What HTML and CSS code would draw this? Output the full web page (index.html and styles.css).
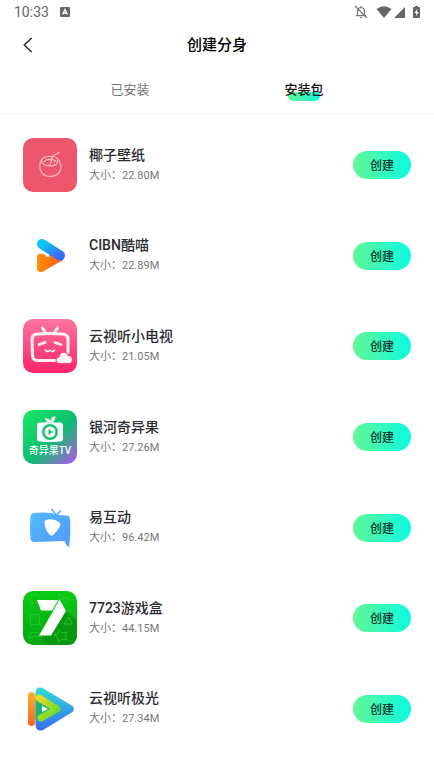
FILE: index.html
```
<!DOCTYPE html>
<html lang="zh-CN">
<head>
    <meta charset="UTF-8">
    <meta name="viewport" content="width=device-width, initial-scale=1.0">
    <title>创建分身</title>
    <link rel="stylesheet" href="styles.css">
</head>
<body>

    <!-- Status bar -->
    <div class="status-bar">
        <span class="time">10:33</span>
        <svg class="app-badge" width="10" height="10" viewBox="0 0 10 10">
            <rect width="10" height="10" rx="1" fill="#666"/>
            <path d="M2.500 7.500 5 2.500l2.500 5M3.600 6h2.800" fill="none" stroke="#fff" stroke-width="1.300"/>
        </svg>
        <div class="status-icons">
            <svg width="14" height="14" viewBox="0 0 14 14" fill="none" stroke="#777" stroke-width="1.200">
                <path d="M3.500 10.500V6q0-3 3.500-3.500Q10.500 3 10.500 6v4.500M2 10.700h10M7 1v2M6 12.500h2M1 1l12 12"/>
            </svg>
            <svg class="wifi" width="16" height="12" viewBox="0 0 16 12">
                <path d="M0.500 3Q8-2.500 15.500 3L8 12z" fill="#666"/>
            </svg>
            <svg width="11" height="11" viewBox="0 0 11 11">
                <path d="M11 0v11H0z" fill="#666"/>
            </svg>
            <svg class="battery" width="7" height="12" viewBox="0 0 7 12">
                <path d="M2 0h3v1h1q1 0 1 1v9q0 1-1 1H1q-1 0-1-1V2q0-1 1-1h1z" fill="#666"/>
                <path d="M4.200 3 1.500 7h1.700v3l2.600-4H4.200z" fill="#fff"/>
            </svg>
        </div>
    </div>

    <!-- Header -->
    <header class="header">
        <button class="back" type="button" aria-label="返回">
            <svg width="10" height="16" viewBox="0 0 10 16">
                <path d="M8.700 1 1.200 8l7.500 7" fill="none" stroke="#222" stroke-width="1.400"/>
            </svg>
        </button>
        <h1>创建分身</h1>
    </header>

    <nav class="tabs">
        <a class="tab" href="#installed">已安装</a>
        <a class="tab active" href="#packages"><span>安装包</span></a>
    </nav>

    <!-- Package list -->
    <ul class="app-list" id="packages">
        <li class="app">
            <svg class="app-icon" viewBox="0 0 54 54">
                <rect width="54" height="54" rx="10" fill="#ee566b"/>
                <g fill="none" stroke="#fbc4cb" stroke-width="1.100" stroke-linecap="round">
                    <path d="M19 21c-5 8-1 17.500 8 17.500S41 31 36 22"/>
                    <path d="M19 21c3-3 6-2.500 9-2.500 5 0 7 2 7 4 0 4-4 5.500-7 5.500-5 0-11-2.500-9-7z"/>
                    <path d="M21 23.500c3-3 9-3 12 0M27 27l2.500-9 6.500-3.500"/>
                </g>
            </svg>
            <div class="info">
                <h2>椰子壁纸</h2>
                <p>大小：22.80M</p>
            </div>
            <button class="create" type="button">创建</button>
        </li>
        <li class="app">
            <svg class="app-icon" viewBox="0 0 54 54">
                <defs>
                    <linearGradient id="cibnBlue" x1="0" y1="0" x2="1" y2="1">
                        <stop offset="0" stop-color="#09c9fa"/>
                        <stop offset="1" stop-color="#396bf2"/>
                    </linearGradient>
                    <linearGradient id="cibnOrange" x1="0" y1="0" x2="1" y2="0">
                        <stop offset="0" stop-color="#ff8f0a"/>
                        <stop offset="1" stop-color="#fa5b12"/>
                    </linearGradient>
                </defs>
                <path d="M14 28q0-4 4-3.500l6 2L35 24l5 7-20 11.500q-6 2-6-4z" fill="url(#cibnOrange)"/>
                <path d="M19 15l18 11.500" fill="none" stroke="url(#cibnBlue)" stroke-width="10" stroke-linecap="round"/>
                <path d="M22 24.500l1.500 3.500 4-.5z" fill="#fff"/>
            </svg>
            <div class="info">
                <h2>CIBN酷喵</h2>
                <p>大小：22.89M</p>
            </div>
            <button class="create" type="button">创建</button>
        </li>
        <li class="app">
            <svg class="app-icon" viewBox="0 0 54 54">
                <defs>
                    <linearGradient id="pinkTv" x1="0" y1="0" x2="0" y2="1">
                        <stop offset="0" stop-color="#fd75a0"/>
                        <stop offset="1" stop-color="#fc2468"/>
                    </linearGradient>
                </defs>
                <rect width="54" height="54" rx="10" fill="url(#pinkTv)"/>
                <g fill="none" stroke="#fff0f4" stroke-linecap="round" stroke-linejoin="round">
                    <path d="M19.500 9l3 4.500M34.500 9l-3 4.500" stroke-width="3"/>
                    <path d="M34 41.500H15q-5 0-5.500-5l-.5-16q0-5 5-5.500 13-1 26 0 5 .5 5 5.500v13" stroke-width="3"/>
                    <path d="M16 25.500l6-2M32 23.500l6 2" stroke-width="2.800"/>
                    <path d="M22.500 31q2 3 4.500 0 2.500 3 4.500 0" stroke-width="1.600"/>
                </g>
                <path d="M36 44.500c-4-1-4-6 0-6.500 0-5 7-7 9-1.500 5-1 6 7 1.500 8z" fill="#fff4f7" stroke="#fc3973"/>
            </svg>
            <div class="info">
                <h2>云视听小电视</h2>
                <p>大小：21.05M</p>
            </div>
            <button class="create" type="button">创建</button>
        </li>
        <li class="app">
            <svg class="app-icon" viewBox="0 0 54 54">
                <defs>
                    <linearGradient id="fruitTv" x1="0" y1="0" x2="1" y2="1">
                        <stop offset="0" stop-color="#1bea65"/>
                        <stop offset="0.550" stop-color="#0dbd70"/>
                        <stop offset="0.750" stop-color="#5b8fa8"/>
                        <stop offset="1" stop-color="#ba4dec"/>
                    </linearGradient>
                </defs>
                <rect width="54" height="54" rx="10" fill="url(#fruitTv)"/>
                <path d="M17 12.500h5q5-2 10 0h5q3 0 3 3v13q0 3-3 3-10 1-20 0-3 0-3-3v-13q0-3 3-3z" fill="#fff"/>
                <path d="M27 13c-3-1-5-2-5-5 3 0 5 1 5.500 3 0-3 2-5 5-5 0 4-2 7-5.500 7z" fill="#fff" stroke="#10c66e" stroke-width="0.500"/>
                <circle cx="27" cy="22" r="8" fill="#10c66e"/>
                <circle cx="27" cy="22" r="5.500" fill="#fff"/>
                <path d="M25.500 19v6l4.500-3z" fill="#10c66e"/>
                <text x="27" y="44" text-anchor="middle" class="icon-text">奇异果TV</text>
            </svg>
            <div class="info">
                <h2>银河奇异果</h2>
                <p>大小：27.26M</p>
            </div>
            <button class="create" type="button">创建</button>
        </li>
        <li class="app">
            <svg class="app-icon" viewBox="0 0 54 54">
                <defs>
                    <linearGradient id="blueTv" x1="0" y1="0" x2="1" y2="1">
                        <stop offset="0" stop-color="#50b9ff"/>
                        <stop offset="1" stop-color="#5598fb"/>
                    </linearGradient>
                </defs>
                <path d="M40 41l6 5V35z" fill="#cde6ff"/>
                <path d="M11 12q14-1.500 24 2l9 .5q3 .5 3 4 1 13-1 27.500-3-1-4-6l-31 1q-3 0-3.500-4-1-11 0-21 .5-4 3.500-4z" fill="url(#blueTv)"/>
                <path d="M28.500 8l5 6.500 4.500-5" fill="none" stroke="#53adff" stroke-width="1.500"/>
                <path d="M23 19q7-2 13 2 2 1 1 4-3 6-7 9-2 1-3 0-5-5-5.500-12 0-2 1.500-3z" fill="#fff"/>
            </svg>
            <div class="info">
                <h2>易互动</h2>
                <p>大小：96.42M</p>
            </div>
            <button class="create" type="button">创建</button>
        </li>
        <li class="app">
            <svg class="app-icon" viewBox="0 0 54 54">
                <defs>
                    <linearGradient id="greenBox" x1="0" y1="0" x2="0" y2="1">
                        <stop offset="0" stop-color="#09cb13"/>
                        <stop offset="1" stop-color="#06a812"/>
                    </linearGradient>
                </defs>
                <rect width="54" height="54" rx="10" fill="url(#greenBox)"/>
                <path d="M42 19l12 11v14q0 10-10 10H25l-8-9z" fill="#079a10"/>
                <g fill="none" stroke="#30c936" stroke-width="0.800">
                    <path d="M6 16l5-5M7 24l9-1 1 10-9 1zM10 24q0 4 4 3"/>
                    <circle cx="12" cy="8" r="4.500"/>
                    <circle cx="38" cy="6" r="2.500"/>
                    <circle cx="43" cy="9" r="2.500"/>
                    <path d="M5 47q2-8 7-5 5-2 7 4l-5-1-4 1zM41 33l5-7 3 7zM36 39l3 3 5-1-2 4 2 4-5-1-4 3v-5l-4-2 4-1z"/>
                </g>
                <path d="M14 9h21L29 19.500H18z" fill="#fff"/>
                <path d="M36.500 8.500 43 20 28 44.500H16L30.500 19.500z" fill="#fff"/>
                <path d="M36 9l-6.500 11" stroke="#8be08e" stroke-width="0.600"/>
            </svg>
            <div class="info">
                <h2>7723游戏盒</h2>
                <p>大小：44.15M</p>
            </div>
            <button class="create" type="button">创建</button>
        </li>
        <li class="app">
            <svg class="app-icon" viewBox="0 0 54 54">
                <defs>
                    <linearGradient id="auroraBlue" x1="0" y1="0" x2="0" y2="1">
                        <stop offset="0" stop-color="#2de0d5"/>
                        <stop offset="1" stop-color="#3868f5"/>
                    </linearGradient>
                    <linearGradient id="auroraOrange" x1="0" y1="0" x2="0" y2="1">
                        <stop offset="0" stop-color="#ffb42c"/>
                        <stop offset="1" stop-color="#fa641c"/>
                    </linearGradient>
                    <linearGradient id="auroraGreen" x1="0" y1="0" x2="1" y2="1">
                        <stop offset="0" stop-color="#e8dc1c"/>
                        <stop offset="1" stop-color="#55dc32"/>
                    </linearGradient>
                </defs>
                <path d="M12.500 10q1-6 7-4l30 18q3 3 0 6L20 48q-6 2-7.500-4z" fill="url(#auroraBlue)"/>
                <path d="M12.500 16l16 8v7l-16 7z" fill="#1fb07c"/>
                <path d="M16 16l18 11-16 9" fill="none" stroke="url(#auroraGreen)" stroke-width="7" stroke-linecap="round" stroke-linejoin="round"/>
                <path d="M19 24v6l6-3z" fill="#fff"/>
                <rect x="5" y="10" width="7" height="34" rx="3.500" fill="url(#auroraOrange)"/>
            </svg>
            <div class="info">
                <h2>云视听极光</h2>
                <p>大小：27.34M</p>
            </div>
            <button class="create" type="button">创建</button>
        </li>
    </ul>

</body>
</html>
```

FILE: styles.css
```
* {
    box-sizing: border-box;
}
body {
    margin: 0;
    padding-bottom: 17px;
    min-height: 100vh;
    display: flex;
    flex-direction: column;
    font-family: Roboto, "Noto Sans CJK SC", sans-serif;
    background: #fff;
    color: #2b2c31;
}
button {
    font-family: inherit;
    border: none;
    cursor: pointer;
}
/* Status bar */
.status-bar {
    display: flex;
    align-items: center;
    height: 24px;
    padding: 0 14px;
    color: #666;
}
.time {
    font-size: 14px;
    line-height: 24px;
}
.app-badge {
    margin-left: 11px;
}
.status-icons {
    display: flex;
    align-items: center;
    margin-left: auto;
}
.wifi {
    margin: 0 2px 0 8px;
}
.battery {
    margin-left: 8px;
}
/* Header */
.header {
    display: grid;
    grid-template-columns: 1fr auto 1fr;
    align-items: center;
    height: 42px;
    padding: 0 23px;
}
.back {
    display: flex;
    justify-self: start;
    padding: 0;
    background: none;
}
h1 {
    margin: 0;
    font-size: 15px;
    line-height: 20px;
    font-weight: 500;
    color: #000;
}
.tabs {
    display: flex;
    padding: 0 43px;
    border-bottom: 1px solid #f2f2f2;
}
.tab {
    flex: 1;
    font-size: 13px;
    line-height: 47px;
    text-align: center;
    text-decoration: none;
    color: #777;
}
.tab.active {
    font-weight: 500;
    color: #111;
}
.tab.active span {
    position: relative;
    z-index: 0;
}
.tab.active span::after {
    content: "";
    position: absolute;
    z-index: -1;
    left: 4px;
    right: 4px;
    bottom: -4px;
    height: 9px;
    border-radius: 3px 3px 5px 5px;
    background: linear-gradient(90deg, #62f796, #12f5e0);
}
/* App list */
.app-list {
    flex: 1;
    display: flex;
    flex-direction: column;
    margin: 0;
    padding: 6px 23px 0;
    list-style: none;
}
.app {
    flex: 1;
    display: flex;
    align-items: center;
    gap: 12px;
    min-height: 74px;
}
.app-icon {
    flex: none;
    width: 54px;
    height: 54px;
}
.icon-text {
    font-size: 10px;
    font-weight: 500;
    fill: #fff;
}
.info {
    flex: 1;
}
.info h2 {
    margin: 0;
    font-size: 14px;
    line-height: 20px;
    font-weight: 500;
}
.info p {
    margin: 0;
    font-size: 11px;
    line-height: 21px;
    color: #777;
}
.create {
    width: 58px;
    height: 28px;
    padding: 0 0 1px;
    border-radius: 14px;
    font-size: 12px;
    font-weight: 500;
    color: #073b2c;
    background: linear-gradient(90deg, #62f796, #0cfbe2);
}
```
